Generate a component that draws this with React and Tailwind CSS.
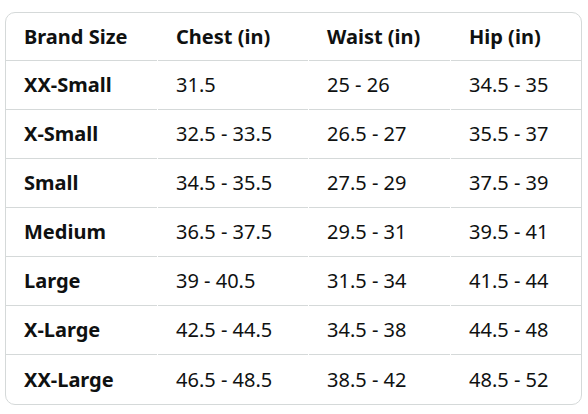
import React from "react";

const rows = [
  ["XX-Small", "31.5", "25 - 26", "34.5 - 35"],
  ["X-Small", "32.5 - 33.5", "26.5 - 27", "35.5 - 37"],
  ["Small", "34.5 - 35.5", "27.5 - 29", "37.5 - 39"],
  ["Medium", "36.5 - 37.5", "29.5 - 31", "39.5 - 41"],
  ["Large", "39 - 40.5", "31.5 - 34", "41.5 - 44"],
  ["X-Large", "42.5 - 44.5", "34.5 - 38", "44.5 - 48"],
  ["XX-Large", "46.5 - 48.5", "38.5 - 42", "48.5 - 52"],
];

const headers = ["Brand Size", "Chest (in)", "Waist (in)", "Hip (in)"];

const App = () => (
  <div className="bg-white w-[588px] h-[414px] pt-[12px] pl-[5px]" style={{ fontFamily: '"Noto Sans", sans-serif' }}>
    <div className="w-[577px] border border-[#d5d9d9] rounded-[10px] overflow-hidden text-[#0f1111] text-[20px]">
      <table className="w-full border-separate border-spacing-x-px border-spacing-y-0 -mx-px" style={{ width: "calc(100% + 2px)" }}>
        <colgroup>
          <col className="w-[151px]" />
          <col className="w-[150px]" />
          <col className="w-[141px]" />
          <col />
        </colgroup>
        <thead>
          <tr>
            {headers.map((h) => (
              <th key={h} className="h-[48px] text-left font-bold pl-[18px] border-b border-[#d5d9d9]">{h}</th>
            ))}
          </tr>
        </thead>
        <tbody>
          {rows.map((r, i) => (
            <tr key={r[0]}>
              {r.map((c, j) => (
                <td
                  key={j}
                  className={`h-[49px] pl-[18px] ${j === 0 ? "font-bold" : ""} ${i < rows.length - 1 ? "border-b border-[#d5d9d9]" : ""}`}
                >
                  {c}
                </td>
              ))}
            </tr>
          ))}
        </tbody>
      </table>
    </div>
  </div>
);

export default App;
